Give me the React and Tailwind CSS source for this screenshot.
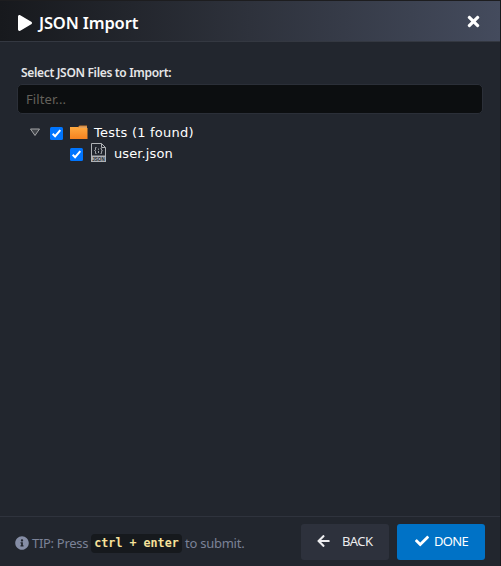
import React from "react";
import { FaTimes, FaInfoCircle, FaCheck, FaPlay, FaArrowLeft } from "react-icons/fa";

function Header() {
  return (
    <header className="flex h-[42px] items-center justify-between border-t border-b border-t-[#1d1d1f] border-b-[#343841] bg-linear-to-r from-[#17191d] via-[#2e323c] to-[#444b5d] pr-[18px] pl-[18px]">
      <div className="flex items-center">
        <FaPlay className="mt-[4px] h-4 w-[14px]" preserveAspectRatio="none" />
        <h1 className="mt-[4px] ml-[7px] text-[16.5px] leading-[24px] font-semibold tracking-[-0.15px] whitespace-nowrap">JSON Import</h1>
      </div>
      <FaTimes className="mt-px size-[17px]" />
    </header>
  );
}

function Check() {
  return (
    <span className="flex size-[13px] shrink-0 items-center justify-center rounded-[1.5px] bg-[#0075ff]">
      <svg viewBox="0 0 13 13" className="size-[13px]" fill="none" stroke="#fff" strokeWidth="2">
        <path d="M2.7 6.8 5.1 9.2 10.3 3.2" />
      </svg>
    </span>
  );
}

function Folder() {
  return (
    <svg viewBox="0 0 18 15" className="h-[15px] w-[18px] shrink-0">
      <defs>
        <linearGradient id="folder" x2="0" y2="1">
          <stop stopColor="#ffa940" />
          <stop offset="1" stopColor="#f58220" />
        </linearGradient>
      </defs>
      <path fill="#c9782a" d="M8 2 9.5.5H17V4H8z" />
      <path fill="#f0c795" d="M9 1.7h8v.8H9z" />
      <path fill="url(#folder)" d="M0 2h8l1.5 1H17.5v11H0z" />
    </svg>
  );
}

function JsonFile() {
  return (
    <svg viewBox="0 0 16 20" className="h-5 w-4 shrink-0" fill="none" stroke="#aeb1b5">
      <path d="M.5 13V.5h10l4 4V13M10.5.5v4h4" />
      <path strokeWidth=".9" d="M5.5 4.5h-1v2.4l-1 .6 1 .6v2.4h1M9.5 5.5h1v1.7l1 .5-1 .5v2.3h-1M7.5 5.6v1.2M7.5 8v2" />
      <path fill="#aeb1b5" stroke="none" d="M0 12.5h15V19H0z" />
      <text x="7.5" y="17.7" textAnchor="middle" textLength="12.4" lengthAdjust="spacingAndGlyphs" fill="#22262d" stroke="none" fontSize="5.6" fontWeight="bold" fontFamily="Liberation Sans, sans-serif">JSON</text>
    </svg>
  );
}

function FileTree() {
  return (
    <div className="mt-[8px] font-['DejaVu_Sans',Verdana,sans-serif] text-[13px] leading-[21px]">
      <div className="flex h-[21px] items-center pl-[12px]">
        <svg viewBox="0 0 12 9" className="h-[9px] w-3" fill="#42454a" stroke="#a4a5a7">
          <path d="M1.5 1h9L6 7.5z" />
        </svg>
        <span className="mt-[2px] ml-[9px]"><Check /></span>
        <span className="ml-[7px]"><Folder /></span>
        <span className="ml-[6px] tracking-[0.23px] whitespace-nowrap">Tests (1 found)</span>
      </div>
      <div className="flex h-[21px] items-center pl-[53px]">
        <span className="mt-px"><Check /></span>
        <span className="-mt-[2px] ml-[8px]"><JsonFile /></span>
        <span className="ml-[7px] tracking-[0.1px] whitespace-nowrap">user.json</span>
      </div>
    </div>
  );
}

function Footer() {
  return (
    <footer className="flex h-[50px] items-center border-t border-[#2f333d] pr-[15px] pl-[15px]">
      <div className="mt-[3px] flex items-center text-[13px] whitespace-nowrap text-[#7b8297]">
        <FaInfoCircle className="size-[14px] text-[#858da5]" />
        <span className="mt-px ml-[3px] w-[59px] tracking-[-0.3px]">TIP: Press</span>
        <code className="flex h-[19px] w-[91px] items-center justify-center rounded-[4px] bg-[#16191d] pt-px font-['DejaVu_Sans_Mono',monospace] text-[11.7px] font-bold text-[#f7e19a]">ctrl + enter</code>
        <span className="mt-px ml-[3px] tracking-[-0.25px]">to submit.</span>
      </div>
      <div className="ml-auto flex gap-2 text-[13px] text-white">
        <button className="flex h-9 w-[88px] items-center rounded-[3px] bg-[#2d313c] pl-4 text-[#ededef]">
          <FaArrowLeft className="-mt-[2px] h-[14px] w-[13px]" />
          <span className="ml-[12px] tracking-[-0.6px]">BACK</span>
        </button>
        <button className="flex h-9 w-[88px] items-center rounded-[3px] bg-[#0072c6] pl-[18px]">
          <FaCheck className="-mt-[2px] size-[14px]" />
          <span className="ml-[5px] tracking-[-0.7px]">DONE</span>
        </button>
      </div>
    </footer>
  );
}

export default function App() {
  return (
    <div className="h-[566px] w-[501px] overflow-hidden border-r border-[#17191d] bg-[#22262e] font-['Noto_Sans',sans-serif] text-white">
      <div className="flex h-full flex-col">
        <Header />
        <main className="flex-1 px-[17px] pt-[21px]">
          <div className="pl-1 text-[12px] leading-[20px] font-semibold tracking-[-0.33px] whitespace-nowrap text-[#e6e6e8]">Select JSON Files to Import:</div>
          <input placeholder="Filter..." className="mt-[1px] block h-[30px] w-[466px] rounded-[5px] border border-[#2b2f38] bg-[#0c0e10] px-2 text-[13px] tracking-[0.1px] outline-none placeholder:text-[#65615b]" />
          <FileTree />
        </main>
        <Footer />
      </div>
    </div>
  );
}
